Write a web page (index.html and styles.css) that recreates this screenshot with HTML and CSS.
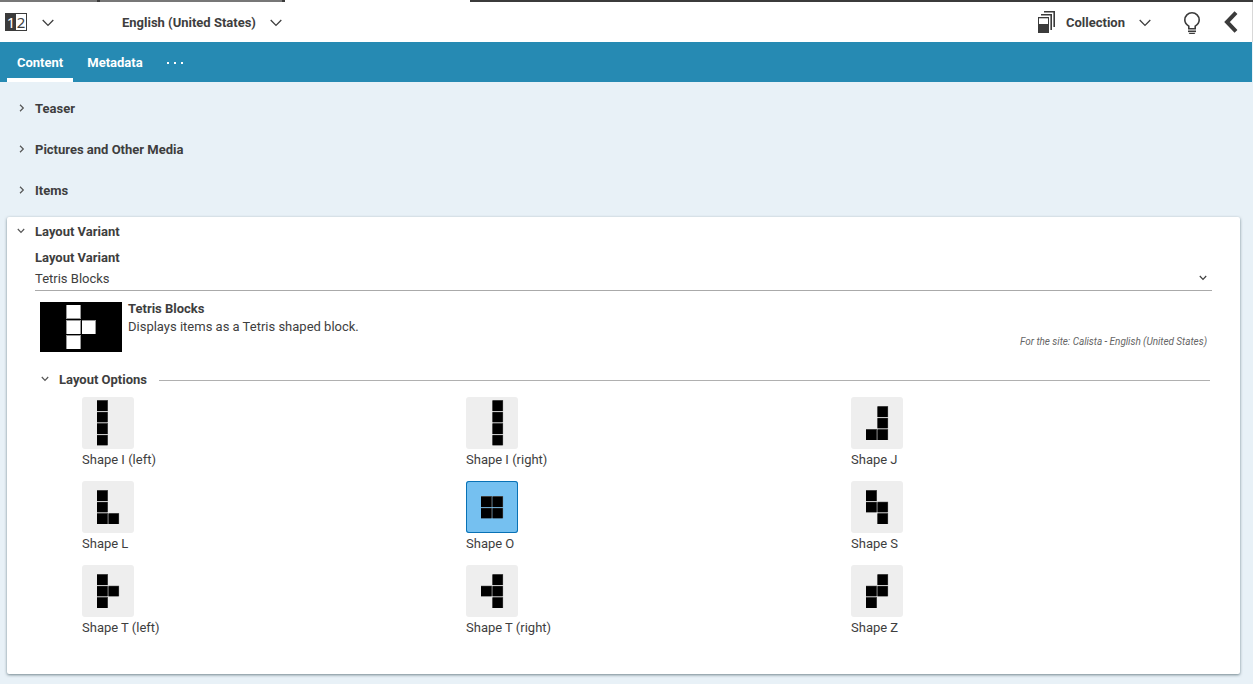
FILE: index.html
```html
<!DOCTYPE html>
<html lang="en">
<head>
<meta charset="utf-8">
<title>Collection</title>
<link rel="stylesheet" href="styles.css">
</head>
<body>
<svg class="defs" width="0" height="0">
  <symbol id="chevron" viewBox="0 0 12 8"><path d="M.7 1 6 6.4 11.3 1" fill="none" stroke="currentColor" stroke-width="1.3"/></symbol>
  <symbol id="small-chevron" viewBox="0 0 8 6"><path d="M.8 1 4 4.3 7.2 1" fill="none" stroke="currentColor" stroke-width="1.2"/></symbol>
  <symbol id="sq" viewBox="0 0 11 11"><path fill="#555" d="M0 0h11v11H0z"/><path d="M0 .7h10.3v10.3H0z"/></symbol>
</svg>
<div class="strip"><i></i><i></i><b></b></div>
<header class="toolbar">
  <div class="compare"><span>1</span><span>2</span></div>
  <svg class="chev chev-version" width="12" height="8"><use href="#chevron"/></svg>
  <span class="locale">English (United States)</span>
  <svg class="chev" width="12" height="8"><use href="#chevron"/></svg>
  <svg class="stack" width="17" height="22" viewBox="0 0 17 22"><path fill="none" stroke="#3b3b3b" stroke-width="1.6" d="M6 .8h10.200V16M3 3.800h10.200V19"/><path fill="#3b3b3b" d="M0 6h11v16H0z"/><path fill="#fff" d="M1 7.300h9V13H1z"/></svg>
  <span class="type">Collection</span>
  <svg class="chev" width="12" height="8"><use href="#chevron"/></svg>
  <svg class="bulb" width="16" height="22" viewBox="0 0 16 22"><path fill="none" stroke="#3b3b3b" stroke-width="1.6" d="M4.800 16.700v-2.500C2.200 12.400.8 10.600.8 8a7.200 7.200 0 0 1 14.400 0c0 2.600-1.400 4.400-4 6.200v2.500zM4 19.300h8"/><path fill="#3b3b3b" d="M4.500 20.700h7L10.500 22h-5z"/></svg>
  <svg class="back" width="14" height="22" viewBox="0 0 14 22"><path fill="none" stroke="#3b3b3b" stroke-width="4" d="M12 1.700 3 11l9 9.300"/></svg>
</header>
<nav class="tabs">
  <span class="tab active">Content</span>
  <span class="tab">Metadata</span>
  <span class="dots"><i></i><i></i><i></i></span>
</nav>
<main>
  <section class="closed"><svg class="arrow side" width="8" height="6"><use href="#small-chevron"/></svg><h2>Teaser</h2></section>
  <section class="closed"><svg class="arrow side" width="8" height="6"><use href="#small-chevron"/></svg><h2>Pictures and Other Media</h2></section>
  <section class="closed"><svg class="arrow side" width="8" height="6"><use href="#small-chevron"/></svg><h2>Items</h2></section>
  <section class="card">
    <div class="card-head"><svg class="arrow" width="8" height="6"><use href="#small-chevron"/></svg><h2>Layout Variant</h2></div>
    <h3>Layout Variant</h3>
    <div class="select"><span>Tetris Blocks</span><svg class="select-arrow" width="8" height="6"><use href="#small-chevron"/></svg></div>
    <div class="variant">
      <svg width="82" height="50" viewBox="0 0 82 50"><path d="M0 0h82v50H0z"/><path fill="#999" d="M26 3h15v14H26zM26 18h15v14H26zM42 18h14v14H42zM26 33h15v14H26z"/><path fill="#fff" d="M27 3h13v13H27zM27 19h13v13H27zM42 19h13v13H42zM27 34h13v13H27z"/></svg>
      <div class="info"><strong>Tetris Blocks</strong><p>Displays items as a Tetris shaped block.</p></div>
      <em>For the site: Calista - English (United States)</em>
    </div>
    <div class="options-head"><svg class="arrow" width="8" height="6"><use href="#small-chevron"/></svg><h2>Layout Options</h2><hr></div>
    <div class="shapes" id="shapes"></div>
  </section>
</main>
<script src="shapes.js"></script>
</body>
</html>
```

FILE: styles.css
```css
* { box-sizing: border-box; }
body { margin: 0; height: 684px; overflow: hidden; background: #e8f1f7; color: #3e3e3e; font: 13px/18px Roboto, sans-serif; display: flex; flex-direction: column; }
h2, h3, p { margin: 0; }
h2, h3, strong { font-size: 13px; font-weight: 700; line-height: 18px; }
svg { flex: none; display: block; }
.defs { position: absolute; }
.strip { height: 2px; flex: none; display: flex; background: #fff; }
.strip i { background: #777; border-right: 3px solid #3b3b3b; width: 185px; }
.strip i:first-child { width: 100px; }
.strip b { margin-left: auto; width: 783px; background: #3b3b3b; }
.toolbar { height: 40px; flex: none; background: #fff; display: flex; align-items: center; padding-left: 5px; border-right: 1px solid #d8d8d8; font-weight: 700; }
.compare { width: 22px; height: 18px; border: 1px solid #3b3b3b; display: flex; font: 400 15px/18px "Noto Sans", sans-serif; }
.compare span { width: 10px; height: 18px; margin-top: -1px; text-align: center; }
.compare span:first-child { background: #3b3b3b; color: #fff; }
.chev { margin-top: 1px; }
.chev-version { margin-left: 15px; }
.locale { margin: 0 14px 0 68px; width: 134px; white-space: nowrap; padding-top: 2px; }
.stack { margin-left: auto; }
.type { margin: 0 15px 0 11px; width: 58px; padding-top: 2px; }
.bulb { margin-left: 33px; margin-top: 1px; }
.back { margin: 0 14px 0 24px; }
.tabs { height: 40px; flex: none; margin-right: 1px; background: #268ab3; color: #fff; font-weight: 700; display: flex; padding-left: 7px; }
.tab { width: 66px; text-align: center; line-height: 41px; height: 40px; margin-right: 8px; }
.active { border-bottom: 4px solid #fff; margin-right: 9px; }
.dots { display: flex; gap: 5px; align-items: center; margin: 1px 0 0 11px; }
.dots i { width: 2px; height: 2px; background: #fff; }
main { padding: 18px 13px 0 7px; }
.closed { height: 41px; display: flex; align-items: flex-start; padding-left: 11px; }
.arrow { margin: 5px 9px 0 0; color: #555; }
.side { transform: rotate(-90deg); }
.card { height: 457px; margin-top: -6px; background: #fff; border-radius: 2px; box-shadow: 0 1px 3px rgba(50, 75, 85, .65); padding: 6px 28px 0; }
.card-head { display: flex; margin-left: -18px; height: 26px; }
.card-head .arrow { margin-right: 10px; }
.select { height: 24px; padding: 3px 5px 0 0; border-bottom: 1px solid #aaa; display: flex; justify-content: space-between; }
.select-arrow { margin-top: 5px; }
.variant { display: flex; margin: 11px 5px 0; height: 50px; }
.info { margin-left: 6px; margin-top: -2px; }
.variant em { font-size: 10px; line-height: 14px; margin: 33px 0 0 auto; color: #666; letter-spacing: -.04px; }
.options-head { display: flex; margin: 19px 2px 0 6px; height: 18px; }
.options-head .arrow { margin-right: 10px; }
.options-head hr { flex: 1; height: 1px; border: 0; background: #b0b0b0; margin: 9px 0 0 12px; }
.shapes { margin: 8px 0 0 47px; display: grid; grid-template-columns: 384px 385px 1fr; grid-auto-rows: 84px; }
.tile { width: 52px; height: 52px; display: block; background: #eee; border-radius: 3px; margin-bottom: 2px; }
.selected .tile { background: #75c0f0; box-shadow: inset 0 0 0 1px #0871b5; }
```

FILE: shapes.js
```javascript
// Each shape lists its squares as [column, row]; top is the first row's offset.
const shapes = [
  ["Shape I (left)", 3, [[0,0],[0,1],[0,2],[0,3]]],
  ["Shape I (right)", 3, [[1,0],[1,1],[1,2],[1,3]]],
  ["Shape J", 9, [[1,0],[1,1],[0,2],[1,2]]],
  ["Shape L", 9, [[0,0],[0,1],[0,2],[1,2]]],
  ["Shape O", 15, [[0,0],[1,0],[0,1],[1,1]], true],
  ["Shape S", 9, [[0,0],[0,1],[1,1],[1,2]]],
  ["Shape T (left)", 9, [[0,0],[0,1],[1,1],[0,2]]],
  ["Shape T (right)", 9, [[1,0],[0,1],[1,1],[1,2]]],
  ["Shape Z", 9, [[1,0],[0,1],[1,1],[0,2]]]
];
document.getElementById("shapes").innerHTML = shapes.map(([name, top, cells, selected]) =>
  `<div class="${selected ? "selected" : ""}"><svg class="tile" viewBox="0 0 52 52">${cells.map(([x, y]) =>
    `<use href="#sq" x="${15 + x * 11.3}" y="${top + y * 11.5}" width="11" height="11"/>`).join("")}</svg>${name}</div>`).join("");
```
